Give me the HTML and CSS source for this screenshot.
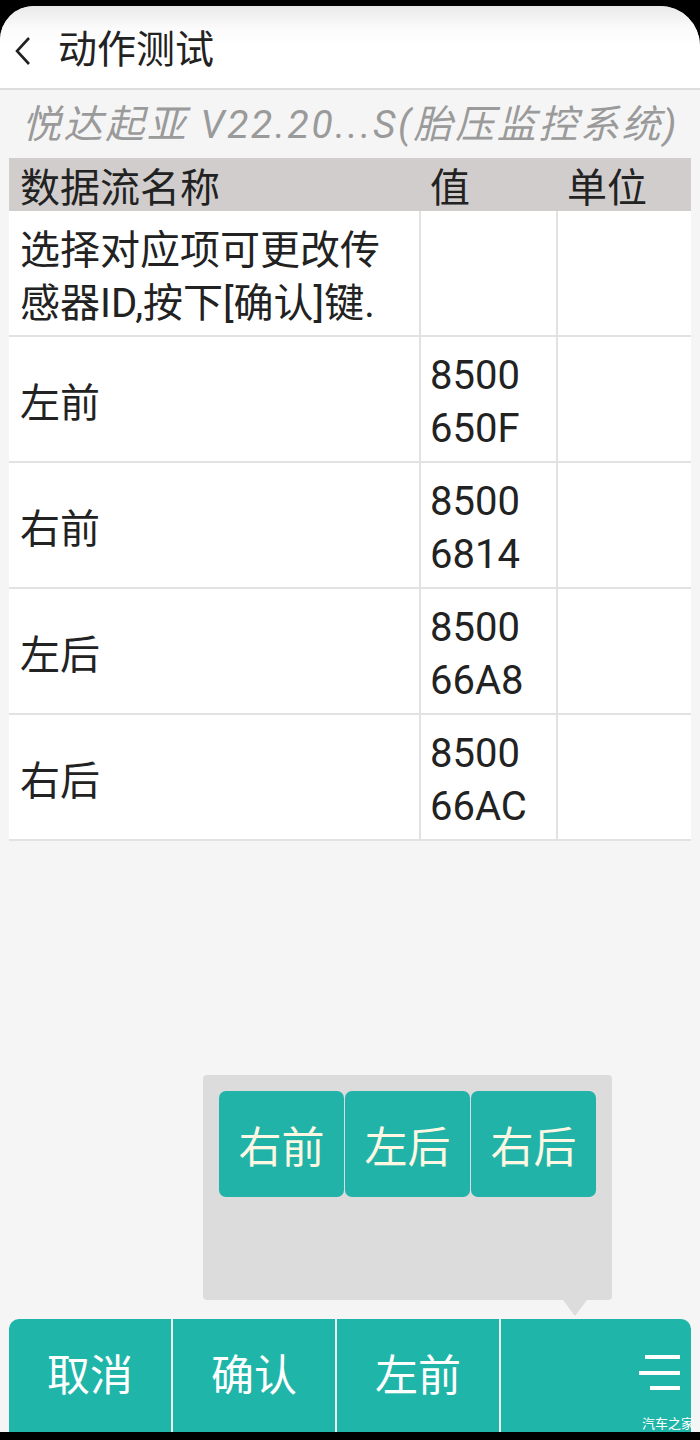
FILE: index.html
```html
<!DOCTYPE html>
<html lang="zh-CN">
<head>
<meta charset="utf-8">
<title>动作测试</title>
<link rel="stylesheet" href="styles.css">
</head>
<body>
<div class="app">
  <header class="appbar">
    <svg class="back" width="18" height="30" viewBox="0 0 18 30"><polyline points="15,2 3,15 15,28" fill="none" stroke="#222" stroke-width="2.6" stroke-linejoin="miter"/></svg>
    <h1 class="title">动作测试</h1>
  </header>
  <div class="subtitle">悦达起亚 V22.20...S(胎压监控系统)</div>

  <div class="grid">
    <div class="hcell">数据流名称</div>
    <div class="hcell">值</div>
    <div class="hcell">单位</div>

    <div class="cell name">选择对应项可更改传<br>感器ID,按下[确认]键.</div>
    <div class="cell val"></div>
    <div class="cell unit"></div>

    <div class="cell name">左前</div>
    <div class="cell val">8500<br>650F</div>
    <div class="cell unit"></div>

    <div class="cell name">右前</div>
    <div class="cell val">8500<br>6814</div>
    <div class="cell unit"></div>

    <div class="cell name">左后</div>
    <div class="cell val">8500<br>66A8</div>
    <div class="cell unit"></div>

    <div class="cell name">右后</div>
    <div class="cell val">8500<br>66AC</div>
    <div class="cell unit"></div>
  </div>

  <div class="popup">
    <div class="pop-btns">
      <div class="pbtn">右前</div>
      <div class="pbtn">左后</div>
      <div class="pbtn">右后</div>
    </div>
    <span class="tail"></span>
  </div>

  <nav class="bottombar">
    <div class="bbtn">取消</div>
    <div class="bbtn">确认</div>
    <div class="bbtn">左前</div>
    <div class="bbtn menu">
      <svg width="44" height="36" viewBox="0 0 44 36"><rect x="6" y="0" width="35" height="4" fill="#fff"/><rect x="0" y="16" width="41" height="4" fill="#fff"/><rect x="11" y="31" width="30" height="4" fill="#fff"/></svg>
    </div>
  </nav>
  <div class="watermark">汽车之家</div>
</div>
</body>
</html>
```

FILE: styles.css
```css
* { box-sizing: border-box; margin: 0; padding: 0; }

html, body {
  width: 700px;
  height: 1440px;
  background: #000;
  overflow: hidden;
}

body {
  font-family: Roboto, "Noto Sans CJK SC", sans-serif;
  color: #222;
}

.app {
  position: relative;
  margin-top: 6px;
  height: 1426px;
  background: #f5f5f5;
  border-radius: 34px 40px 0 0;
  display: flex;
  flex-direction: column;
  overflow: hidden;
}

.appbar {
  height: 84px;
  background: linear-gradient(#e9e9e9 0px, #fbfbfb 22px, #fff 40px);
  border-bottom: 2px solid #dedede;
  display: flex;
  align-items: center;
  padding-left: 14px;
  gap: 26px;
  flex-shrink: 0;
}

.back { display: block; margin-top: 8px; }

.title {
  font-size: 39px;
  font-weight: 400;
  color: #222;
  line-height: 1;
  margin-top: 6px;
}

.subtitle {
  height: 68px;
  line-height: 70px;
  padding-left: 22px;
  font-size: 39px;
  font-style: italic;
  color: #9a9a9a;
  letter-spacing: 2.6px;
  white-space: nowrap;
  flex-shrink: 0;
}

.grid {
  margin: 0 9px;
  display: grid;
  grid-template-columns: 410px 137px 135px;
  flex-shrink: 0;
}

.hcell {
  height: 53px;
  background: #d1cdcd;
  font-size: 40px;
  line-height: 53px;
  padding-left: 11px;
  padding-top: 4px;
  white-space: nowrap;
}

.cell {
  height: 126px;
  background: #fff;
  border-bottom: 2px solid #e2e2e2;
  font-size: 40px;
  line-height: 53px;
  display: flex;
  flex-direction: column;
  justify-content: center;
  white-space: nowrap;
  padding-top: 6px;
}

.name { padding-left: 11px; padding-top: 8px; }

.val, .unit {
  border-left: 2px solid #e2e2e2;
  padding-left: 9px;
}

.popup {
  position: absolute;
  left: 203px;
  top: 1069px;
  width: 409px;
  height: 225px;
  background: #dcdcdc;
  border-radius: 4px;
  padding: 16px;
}

.pop-btns {
  display: flex;
  gap: 1px;
}

.pbtn {
  width: 125px;
  height: 106px;
  background: #21b3a7;
  border-radius: 7px;
  color: #fdf7e3;
  font-size: 43px;
  display: flex;
  align-items: center;
  justify-content: center;
}

.tail {
  position: absolute;
  left: 360px;
  bottom: -16px;
  width: 0;
  height: 0;
  border-left: 12px solid transparent;
  border-right: 12px solid transparent;
  border-top: 16px solid #dcdcdc;
}

.bottombar {
  margin: auto 9px 0 9px;
  height: 113px;
  background: #1fb5a8;
  border-radius: 10px 10px 0 0;
  display: flex;
  flex-shrink: 0;
}

.bbtn {
  width: 164px;
  border-right: 2px solid #eaf7f5;
  color: #fff;
  font-size: 43px;
  display: flex;
  align-items: center;
  justify-content: center;
  padding-bottom: 8px;
}

.bbtn.menu {
  flex: 1;
  border-right: none;
  justify-content: flex-end;
  padding-right: 8px;
  padding-bottom: 6px;
}

.bbtn.menu svg { display: block; }

.watermark {
  position: absolute;
  right: 6px;
  bottom: 1px;
  font-size: 13px;
  line-height: 16px;
  color: #fff;
  font-family: "Noto Sans CJK SC", sans-serif;
}
```
